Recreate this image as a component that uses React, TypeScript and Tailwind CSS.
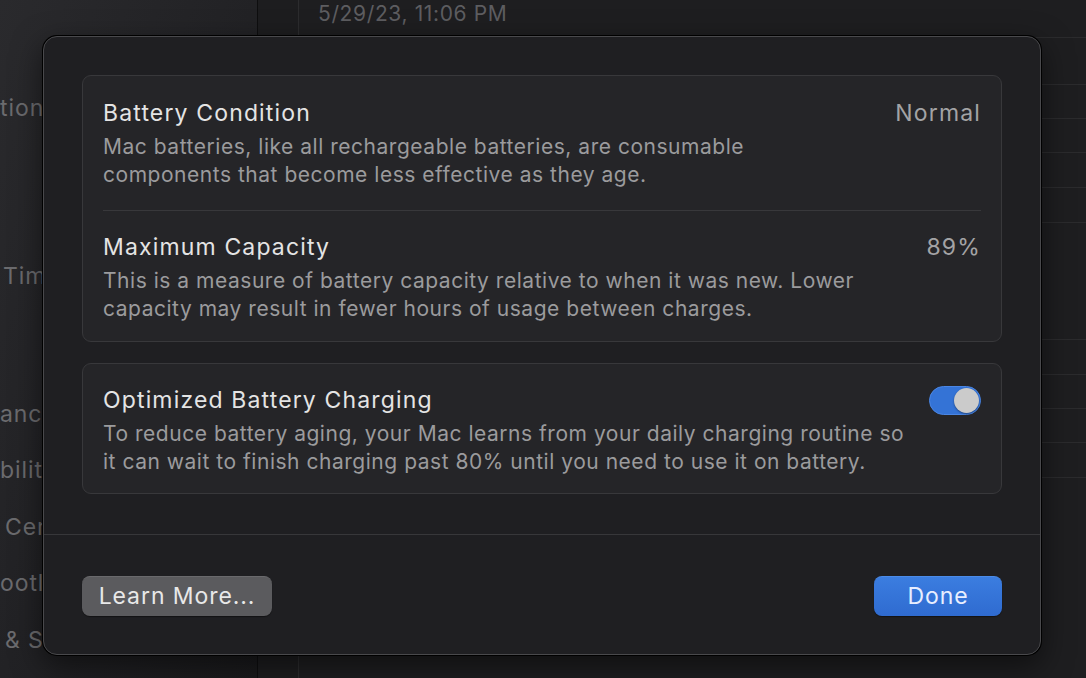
import React, { useState } from "react";

const sideLabels = [
  { text: "tions", top: "mt-[94px]", left: "pl-0" },
  { text: "Time", top: "mt-[140px]", left: "pl-[3px]" },
  { text: "ance", top: "mt-[110px]", left: "pl-0" },
  { text: "bility", top: "mt-[28px]", left: "pl-0" },
  { text: "Center", top: "mt-[29px]", left: "pl-[5px]" },
  { text: "ootlight", top: "mt-[28px]", left: "pl-0" },
  { text: "& Security", top: "mt-[29px]", left: "pl-[5px]" },
];

const Toggle = () => {
  const [on, setOn] = useState(true);
  return (
    <button
      onClick={() => setOn(!on)}
      className={
        on
          ? "w-[52px] h-[29px] rounded-full bg-[#3473d6] border border-[#4a86e4] flex items-center justify-end px-[1px] shrink-0"
          : "w-[52px] h-[29px] rounded-full bg-[#3a3a3d] border border-[#4a4a4d] flex items-center justify-start px-[1px] shrink-0"
      }
    >
      <span className="w-[25px] h-[25px] rounded-full bg-[#cbcbcb] shadow-[0_1px_2px_rgba(0,0,0,0.4)]" />
    </button>
  );
};

const Row = ({
  title,
  value,
  children,
  right,
}: {
  title: string;
  value?: string;
  children: React.ReactNode;
  right?: React.ReactNode;
}) => (
  <div className="flex justify-between gap-4">
    <div>
      <div className="text-[23px] leading-[28px] tracking-[0.05em] text-[#e4e4e4]">
        {title}
      </div>
      <div className="mt-[6px] text-[21px] leading-[28px] tracking-[0.025em] text-[#9b9b9d] whitespace-nowrap">
        {children}
      </div>
    </div>
    {value && (
      <div className="text-[23px] leading-[28px] tracking-[0.05em] text-[#a3a3a5]">
        {value}
      </div>
    )}
    {right}
  </div>
);

export default function App() {
  return (
    <div
      className="relative w-[1086px] h-[678px] overflow-hidden bg-[#1c1c1e] flex"
      style={{ fontFamily: "Inter, 'Noto Sans', sans-serif" }}
    >
      {/* sidebar */}
      <div className="w-[258px] h-full bg-gradient-to-br from-[#2a2a2d] via-[#222225] to-[#1a1a1c] border-r border-[#0e0e0f] flex flex-col text-[23px] leading-[28px] tracking-[0.04em] text-[#6b6b6e] whitespace-nowrap">
        {sideLabels.map((l) => (
          <div key={l.text} className={`${l.top} ${l.left}`}>
            {l.text}
          </div>
        ))}
      </div>
      <div className="w-[41px] h-full bg-[#1d1d1f] border-r border-[#2c2c2e]" />
      {/* content */}
      <div className="flex-1 h-full bg-[#1e1e20] flex flex-col">
        <div className="h-[38px] border-b border-[#2b2b2d] pl-[19px] text-[21px] leading-[28px] tracking-[0.03em] text-[#5d5d60]">
          5/29/23, 11:06 PM
        </div>
        <div className="h-[47px] border-b border-[#2b2b2d]" />
        <div className="h-[34px] border-b border-[#2b2b2d]" />
        <div className="h-[34px] border-b border-[#2b2b2d]" />
        <div className="h-[35px] border-b border-[#2b2b2d]" />
        <div className="h-[35px] border-b border-[#2b2b2d]" />
        <div className="h-[117px] border-b border-[#2b2b2d]" />
        <div className="h-[35px] border-b border-[#2b2b2d]" />
        <div className="h-[34px] border-b border-[#2b2b2d]" />
        <div className="h-[34px] border-b border-[#2b2b2d]" />
        <div className="h-[35px] border-b border-[#2b2b2d]" />
      </div>

      {/* dialog */}
      <div className="absolute left-[42px] top-[35px] w-[1000px] h-[621px] rounded-[15px] bg-[#000] p-[1px] shadow-[0_10px_30px_rgba(0,0,0,0.5)]">
        <div className="w-full h-full rounded-[14px] border border-[#49494c] bg-[#1f1f22] flex flex-col">
          <div className="px-[38px] pt-[38px] flex flex-col gap-[21px]">
            <div className="rounded-[9px] border border-[#38383b] bg-[#252528] px-[20px] pt-[23px] pb-[18px]">
              <Row title="Battery Condition" value="Normal">
                Mac batteries, like all rechargeable batteries, are consumable
                <br />
                components that become less effective as they age.
              </Row>
              <div className="h-px bg-[#38383b] mt-[21px] mb-[22px]" />
              <Row title="Maximum Capacity" value="89%">
                This is a measure of battery capacity relative to when it was new. Lower
                <br />
                capacity may result in fewer hours of usage between charges.
              </Row>
            </div>
            <div className="rounded-[9px] border border-[#38383b] bg-[#252528] px-[20px] pt-[22px] pb-[17px]">
              <Row title="Optimized Battery Charging" right={<Toggle />}>
                To reduce battery aging, your Mac learns from your daily charging routine so
                <br />
                it can wait to finish charging past 80% until you need to use it on battery.
              </Row>
            </div>
          </div>
          <div className="mt-[40px] h-px bg-[#37373a]" />
          <div className="px-[38px] pt-[41px] flex justify-between">
            <button className="w-[190px] h-[40px] rounded-[8px] bg-[#5b5b5e] border-t border-[#6a6a6d] text-[23px] tracking-[0.04em] text-[#e8e8e8] shadow-[0_1px_1px_rgba(0,0,0,0.4)]">
              Learn More...
            </button>
            <button className="w-[128px] h-[40px] rounded-[8px] bg-gradient-to-b from-[#3b7de0] to-[#2f6bd0] border-t border-[#4b8be8] text-[23px] tracking-[0.04em] text-[#e8eeff] shadow-[0_1px_1px_rgba(0,0,0,0.4)]">
              Done
            </button>
          </div>
        </div>
      </div>
    </div>
  );
}
